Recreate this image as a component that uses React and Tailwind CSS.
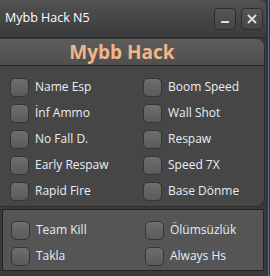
import React from 'react';

const topLeft = ['Name Esp', 'İnf Ammo', 'No Fall D.', 'Early Respaw', 'Rapid Fire'];
const topRight = ['Boom Speed', 'Wall Shot', 'Respaw', 'Speed 7X', 'Base Dönme'];
const bottom = [['Team Kill', 'Ölümsüzlük'], ['Takla', 'Always Hs']];

function Check({ label }) {
  return (
    <div className="flex items-center gap-[6px] h-[26px]">
      <div className="w-[19px] h-[19px] rounded-[5px] border border-[#353535] bg-gradient-to-b from-[#6e6e6e] to-[#5a5a5a] shrink-0" />
      <span className="text-[12px] text-[#e8eef4] leading-none">{label}</span>
    </div>
  );
}

export default function App() {
  return (
    <div className="w-[270px] h-[276px] flex bg-[#3a3a3a] overflow-hidden" style={{ fontFamily: '"Open Sans", "Noto Sans", sans-serif' }}>
      <div className="w-[266px] flex flex-col">
        {/* Title bar */}
        <div className="h-[38px] flex items-center justify-between pl-[5px] pr-[3px] bg-gradient-to-b from-[#525252] to-[#3b3b3b] border-b border-[#262626] rounded-tr-[6px]">
          <span className="text-[12.5px] text-white">Mybb Hack N5</span>
          <div className="flex gap-[5px]">
            <div className="w-[22px] h-[22px] rounded-[4px] border border-[#2c2c2c] bg-gradient-to-b from-[#575757] to-[#454545] flex items-end justify-center pb-[6px]">
              <div className="w-[8px] h-[2px] bg-[#dcdcdc]" />
            </div>
            <div className="w-[22px] h-[22px] rounded-[4px] border border-[#2c2c2c] bg-gradient-to-b from-[#575757] to-[#454545] flex items-center justify-center">
              <svg width="10" height="10" viewBox="0 0 10 10">
                <path d="M1 1 L9 9 M9 1 L1 9" stroke="#dcdcdc" strokeWidth="2" />
              </svg>
            </div>
          </div>
        </div>

        {/* Main panel */}
        <div className="mt-[1px] rounded-tr-[8px] rounded-br-[8px] bg-[#464646] border-r border-b border-[#2e2e2e] w-[265px]">
          <div className="h-[27px] rounded-tr-[8px] bg-gradient-to-b from-[#5c5c5c] to-[#4f4f4f] border-b border-[#262626] flex items-center justify-center pr-[20px]">
            <span className="text-[19px] font-bold text-[#f2b588] leading-none">Mybb Hack</span>
          </div>
          <div className="grid grid-cols-[133px_1fr] pl-[10px] pt-[8px] pb-[2px]">
            <div className="flex flex-col">
              {topLeft.map((t) => <Check key={t} label={t} />)}
            </div>
            <div className="flex flex-col">
              {topRight.map((t) => <Check key={t} label={t} />)}
            </div>
          </div>
        </div>

        {/* Bottom panel */}
        <div className="mt-[2px] ml-[2px] w-[262px] h-[62px] border border-[#222222] bg-[#555555] pl-[8px] pt-[7px] grid grid-cols-[134px_1fr] content-start">
          {bottom.flat().map((t) => <Check key={t} label={t} />)}
        </div>
      </div>
      <div className="flex-1 bg-[#30363e] flex justify-center">
        <div className="w-[1px] bg-[#56708e]" />
      </div>
    </div>
  );
}
